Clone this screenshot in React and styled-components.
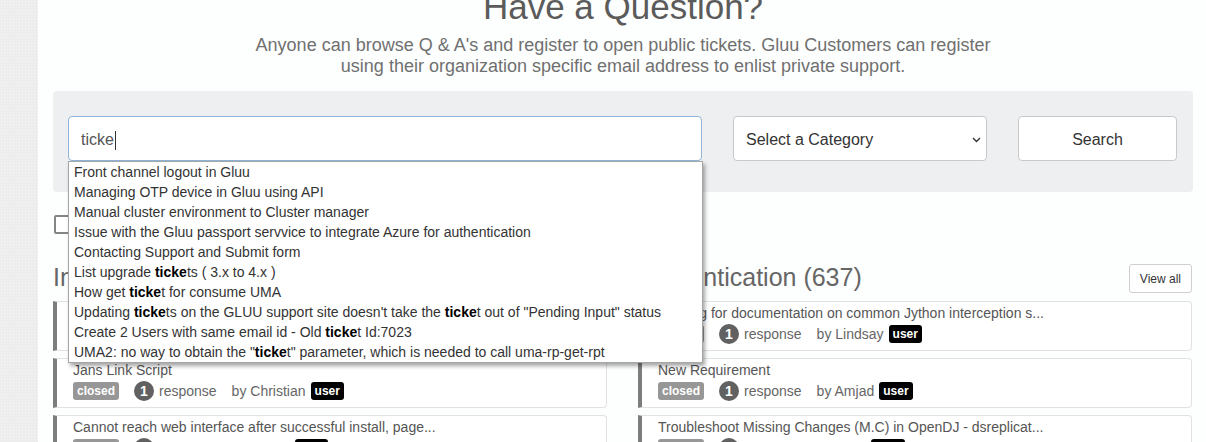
import React from 'react'
import styled, { createGlobalStyle } from 'styled-components'

const GlobalStyle = createGlobalStyle`
  html, body {
    margin: 0;
    padding: 0;
    background: #fff;
    font-family: "Liberation Sans", Arial, sans-serif;
    overflow: hidden;
  }
  * { box-sizing: border-box; }
`

const Page = styled.div`
  display: flex;
  width: 1206px;
  height: 442px;
  overflow: hidden;
`

const Sidebar = styled.div`
  width: 38px;
  flex: none;
  background-color: #ecedec;
  background-image: radial-gradient(#f6f6f6 0.6px, transparent 0.8px);
  background-size: 3px 3px;
`

const Main = styled.div`
  flex: 1;
  padding: 0 13px 0 15px;
  background: #fdfefe;
`

const Container = styled.div`
  width: 1140px;
`

const Title = styled.h1`
  margin: -13px 0 0;
  font-size: 35px;
  line-height: 40px;
  font-weight: normal;
  color: #5b5b5b;
  text-align: center;
`

const Lead = styled.p`
  margin: 8px auto 0;
  width: 760px;
  font-size: 18px;
  line-height: 21px;
  color: #707070;
  text-align: center;
`

const SearchPanel = styled.div`
  margin-top: 14px;
  display: grid;
  grid-template-columns: 634px 254px 159px;
  column-gap: 31px;
  padding: 25px 16px 31px 15px;
  background: #eeeff1;
  border-radius: 4px;
`

const InputWrap = styled.div`
  position: relative;
`

const Input = styled.div`
  height: 45px;
  display: flex;
  align-items: center;
  padding: 3px 12px 0;
  border: 1px solid #8fb6d9;
  border-radius: 4px;
  background: #fff;
  font-size: 16px;
  color: #555;
`

const Caret = styled.span`
  display: inline-block;
  width: 1px;
  height: 19px;
  margin-left: 1px;
  background: #333;
`

const Suggestions = styled.ul`
  position: absolute;
  top: 45px;
  left: 0;
  width: 635px;
  margin: 0;
  padding: 0;
  list-style: none;
  background: #fff;
  border: 1px solid #a6a6a6;
  box-shadow: 2px 3px 4px rgba(0, 0, 0, 0.35);
  z-index: 5;
`

const Suggestion = styled.li`
  height: 20px;
  line-height: 20px;
  padding-left: 5px;
  font-size: 14px;
  color: #333;
  white-space: nowrap;
  & b { color: #000; }
`

const Select = styled.div`
  height: 45px;
  display: flex;
  align-items: center;
  justify-content: space-between;
  padding: 3px 5px 0 12px;
  border: 1px solid #c9c9c9;
  border-radius: 4px;
  background: #fff;
  font-size: 16px;
  color: #333;
`

const Button = styled.button`
  height: 45px;
  border: 1px solid #c9c9c9;
  border-radius: 4px;
  background: #fff;
  font-family: inherit;
  font-size: 16px;
  color: #333;
  padding: 2px 0 0;
`

const Check = styled.span`
  display: block;
  width: 18px;
  height: 19px;
  margin: 23px 0 0 1px;
  border: 2px solid #858585;
  border-radius: 2px;
  background: #fff;
`

const Columns = styled.div`
  margin-top: 30px;
  display: grid;
  grid-template-columns: 554px 554px;
  column-gap: 31px;
`

const ColumnHead = styled.div`
  display: flex;
  align-items: center;
  justify-content: space-between;
  height: 29px;
  margin-bottom: 8px;
`

const Heading = styled.h3`
  margin: 0 0 2px;
  font-size: 25px;
  font-weight: normal;
  color: #666;
  line-height: 29px;
`

const ViewAll = styled.button`
  height: 29px;
  padding: 0 10px;
  border: 1px solid #cfcfcf;
  border-radius: 3px;
  background: #fff;
  font-family: inherit;
  font-size: 12px;
  color: #333;
`

const Card = styled.div`
  margin-bottom: 7px;
  padding: 3px 12px 5px 16px;
  border: 1px solid #e2e2e2;
  border-left: 4px solid #7d7d7d;
  border-radius: 0 4px 4px 0;
  background: #fff;
`

const CardTitle = styled.div`
  font-size: 14px;
  line-height: 16px;
  color: #555;
  white-space: nowrap;
  overflow: hidden;
`

const Meta = styled.div`
  margin-top: 2px;
  height: 22px;
  display: flex;
  align-items: center;
  font-size: 14px;
  color: #666;
`

const Badge = styled.span`
  display: inline-flex;
  align-items: center;
  height: 18px;
  padding: 0 4px;
  border-radius: 3px;
  background: ${p => (p.dark ? '#000' : '#979797')};
  color: #fff;
  font-size: 12px;
  font-weight: bold;
  margin-right: ${p => (p.dark ? '0' : '15px')};
`

const Count = styled.span`
  display: inline-flex;
  align-items: center;
  justify-content: center;
  width: 20px;
  height: 20px;
  margin-right: 5px;
  border-radius: 50%;
  background: #616161;
  color: #fff;
  font-size: 14px;
  font-weight: bold;
`

const Author = styled.span`
  margin: 0 5px 0 15px;
`

const suggestions = [
  ['Front channel logout in Gluu'],
  ['Managing OTP device in Gluu using API'],
  ['Manual cluster environment to Cluster manager'],
  ['Issue with the Gluu passport servvice to integrate Azure for authentication'],
  ['Contacting Support and Submit form'],
  ['List upgrade ', 'ticke', 'ts ( 3.x to 4.x )'],
  ['How get ', 'ticke', 't for consume UMA'],
  ['Updating ', 'ticke', 'ts on the GLUU support site doesn\'t take the ', 'ticke', 't out of "Pending Input" status'],
  ['Create 2 Users with same email id - Old ', 'ticke', 't Id:7023'],
  ['UMA2: no way to obtain the "', 'ticke', 't" parameter, which is needed to call uma-rp-get-rpt'],
]

const columns = [
  {
    title: 'Installation (1492)',
    items: [
      { title: 'Gluu Server 4.2 upgrade fails on Ubuntu 20.04', author: 'Mohammed' },
      { title: 'Jans Link Script', author: 'Christian' },
      { title: 'Cannot reach web interface after successful install, page...', author: 'Daniel' },
    ],
  },
  {
    title: 'Authentication (637)',
    items: [
      { title: 'Looking for documentation on common Jython interception s...', author: 'Lindsay' },
      { title: 'New Requirement', author: 'Amjad' },
      { title: 'Troubleshoot Missing Changes (M.C) in OpenDJ - dsreplicat...', author: 'Mark' },
    ],
  },
]

const Chevron = () => (
  <svg width="9" height="6" viewBox="0 0 9 6">
    <path d="M1 1l3.5 3.5L8 1" fill="none" stroke="#333" strokeWidth="1.4" />
  </svg>
)

const App = () => (
  <>
    <GlobalStyle />
    <Page>
      <Sidebar />
      <Main>
        <Container>
          <Title>Have a Question?</Title>
          <Lead>
            Anyone can browse Q &amp; A's and register to open public tickets. Gluu Customers can register
            using their organization specific email address to enlist private support.
          </Lead>
          <SearchPanel>
            <InputWrap>
              <Input>ticke<Caret /></Input>
              <Suggestions>
                {suggestions.map((parts, i) => (
                  <Suggestion key={i}>
                    {parts.map((part, j) => (j % 2 ? <b key={j}>{part}</b> : <span key={j}>{part}</span>))}
                  </Suggestion>
                ))}
              </Suggestions>
            </InputWrap>
            <Select>
              <span>Select a Category</span>
              <Chevron />
            </Select>
            <Button>Search</Button>
          </SearchPanel>
          <Check />
          <Columns>
            {columns.map(col => (
              <div key={col.title}>
                <ColumnHead>
                  <Heading>{col.title}</Heading>
                  <ViewAll>View all</ViewAll>
                </ColumnHead>
                {col.items.map(item => (
                  <Card key={item.title}>
                    <CardTitle>{item.title}</CardTitle>
                    <Meta>
                      <Badge>closed</Badge>
                      <Count>1</Count>
                      response
                      <Author>by {item.author}</Author>
                      <Badge dark>user</Badge>
                    </Meta>
                  </Card>
                ))}
              </div>
            ))}
          </Columns>
        </Container>
      </Main>
    </Page>
  </>
)

export default App
